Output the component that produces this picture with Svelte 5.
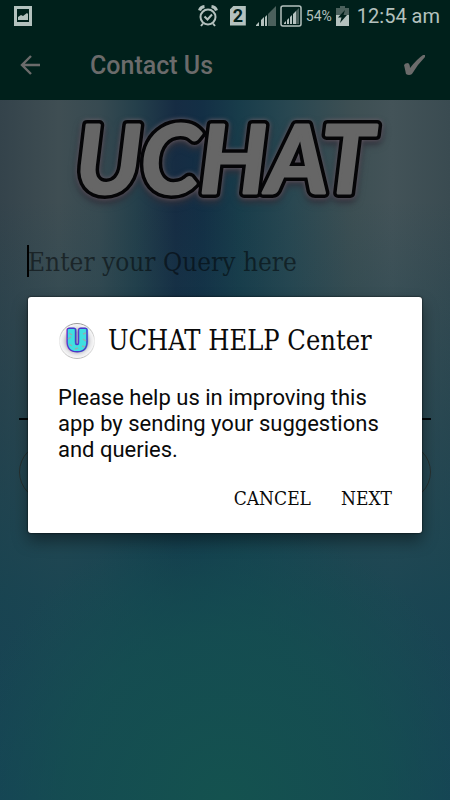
<script>
  let query = $state('');
  let showHelp = $state(true);

  function closeHelp() {
    showHelp = false;
  }
</script>

<div class="screen">
  <div class="status-bar">
    <svg width="18" height="20" viewBox="0 0 18 20">
      <path d="M0 0h18v20H0z M3 3v13h12V3z" fill="#b4c1be" fill-rule="evenodd" />
      <path d="M4 14v-3l3-2 2 1 4-3 1 1v6z" fill="#b4c1be" />
    </svg>
    <div class="status-icons">
      <svg width="20" height="22" viewBox="0 0 20 22" fill="none" stroke="#b4c1be">
        <circle cx="10" cy="12" r="7.5" stroke-width="2" />
        <path d="M6.5 11.5l3 3 4.5-5" stroke-width="2" />
        <path d="M1.5 5.5q1-3.5 5-4M18.5 5.5q-1-3.5-5-4" stroke-width="3" />
        <path d="M5 18.5l-2 2.5M15 18.5l2 2.5" stroke-width="2" />
      </svg>
      <div class="sim">2</div>
      <svg width="20" height="20" viewBox="0 0 20 20">
        <path d="M12 8L20 0v20h-8z" fill="#4b605c" />
        <path d="M0 20v-1l3-3v4zM5 20v-6l3-3v9zM9 20v-9l2-2v11z" fill="#b4c1be" />
      </svg>
      <svg width="22" height="22" viewBox="0 0 22 22">
        <rect x="1" y="1" width="20" height="20" rx="2" fill="none" stroke="#b4c1be" stroke-width="1.5" />
        <path d="M16 6l3-3v16h-3z" fill="#4b605c" />
        <path d="M4 19v-1l2-2v3zM7 19v-4l2-2v6zM10 19v-7l2-2v9zM13 19v-10l3-3v13z" fill="#b4c1be" />
      </svg>
      <span class="percent">54%</span>
      <svg width="13" height="20" viewBox="0 0 13 20">
        <path d="M0 2h4V0h5v2h4v8H0z" fill="#4b605c" />
        <path d="M0 9h13v11H0z" fill="#b4c1be" />
        <path d="M9 4L2 11.5h3.5L4 17l7-8H7.5z" fill="#00201b" />
      </svg>
      <span class="clock">12:54 am</span>
    </div>
  </div>

  <header>
    <button class="icon-btn" aria-label="Back">
      <svg width="20" height="20" viewBox="0 0 20 20" fill="none" stroke="#6b6b6b" stroke-width="2.4">
        <path d="M20 10H2M11 1L2 10l9 9" />
      </svg>
    </button>
    <h1>Contact Us</h1>
    <button class="icon-btn" aria-label="Submit">
      <svg width="22" height="20" viewBox="0 0 22 20">
        <path d="M0 10q1-2 4-2 2 1 2 5Q13 4 19 0l2 0 0 2Q13 10 8 19q-3 2-6 0Q1 14 0 10z" fill="#6b6b6b" />
      </svg>
    </button>
  </header>

  <main>
    <svg class="logo" viewBox="0 0 412 120" role="img" aria-label="UCHAT">
      <text class="logo-edge" x="206" y="93" text-anchor="middle">UCHAT</text>
      <text class="logo-fill" x="206" y="93" text-anchor="middle">UCHAT</text>
    </svg>
    <div class="field">
      <textarea aria-label="Query" placeholder="Enter your Query here" bind:value={query}></textarea>
      <span class="caret"></span>
    </div>
    <button class="send" aria-label="Send"></button>
  </main>

  {#if showHelp}
    <div class="overlay">
      <div class="dialog" role="dialog" aria-labelledby="help-title">
        <div class="dialog-head">
          <svg width="38" height="38" viewBox="0 0 38 38">
            <defs>
              <radialGradient id="disc">
                <stop offset="0.5" stop-color="#a9a7b4" />
                <stop offset="0.8" stop-color="#e8e8ea" />
                <stop offset="1" stop-color="#fbfbfb" />
              </radialGradient>
              <linearGradient id="rim" x2="0" y2="1">
                <stop offset="0" stop-color="#999" />
                <stop offset="0.5" stop-color="#eee" />
                <stop offset="1" stop-color="#bbb" />
              </linearGradient>
            </defs>
            <circle cx="19" cy="19" r="17.5" fill="url(#disc)" stroke="url(#rim)" />
            <text class="badge-edge" x="19" y="28" text-anchor="middle">U</text>
            <text class="badge-fill" x="19" y="28" text-anchor="middle">U</text>
            <path d="M11 11l3 2M10 17l3-2M11 22l3 2M17 27l3-1M24 24l3 1M25 17l3 2M25 12l3-1" stroke="#93aeb2" stroke-width="1.5" />
          </svg>
          <h2 id="help-title">UCHAT HELP Center</h2>
        </div>
        <p>Please help us in improving this app by sending your suggestions and queries.</p>
        <div class="actions">
          <button onclick={closeHelp}>CANCEL</button>
          <button onclick={closeHelp}>NEXT</button>
        </div>
      </div>
    </div>
  {/if}
</div>

<style>
:global(body) { margin: 0; }
.screen {
  position: relative;
  min-height: 100vh;
  display: flex;
  flex-direction: column;
  font-family: Roboto, sans-serif;
  background:
    radial-gradient(ellipse 60% 35% at 50% 100%, #14524f, rgba(20,80,80,0.7) 60%, transparent),
    linear-gradient(transparent 25%, rgba(22,66,80,0.55) 55%, rgba(20,68,82,0.85) 75%, #164256),
    linear-gradient(90deg, #34434b 0%, #3f4e53 13%, #374a51 22%, #25404b 30%, #162c43 39%, #132f45 45%, #183c4a 53%, #284751 64%, #3d4f53 78%, #435358 87%, #3a4b51 100%);
}
button {
  border: 0;
  padding: 0;
  background: none;
  cursor: pointer;
}
svg { display: block; }
.status-bar {
  height: 30px;
  box-sizing: border-box;
  padding: 1px 10px 0 14px;
  display: flex;
  align-items: center;
  justify-content: space-between;
  background: #00201b;
  color: #b4c1be;
}
.status-icons { display: flex; align-items: center; gap: 4px; }
.sim {
  width: 16px;
  margin: 0 6px 0 8px;
  line-height: 20px;
  text-align: center;
  font-size: 18px;
  font-weight: 700;
  color: #00201b;
  background: #b4c1be;
  clip-path: polygon(25% 0, 100% 0, 100% 100%, 0 100%, 0 20%);
}
.percent { font-size: 14px; }
.clock { margin-left: 4px; font-size: 20px; }
header {
  height: 70px;
  padding: 0 24px 0 20px;
  display: flex;
  align-items: center;
  background: #00201b;
}
h1 {
  flex: 1;
  margin: 0 0 0 50px;
  font-size: 25px;
  font-weight: 500;
  color: #6b6b6b;
}
main {
  flex: 1;
  padding: 0 19px;
  display: flex;
  flex-direction: column;
}
.logo {
  height: 120px;
  overflow: visible;
  filter: drop-shadow(0 0 2px #6b626c) drop-shadow(0 4px 3px #30303a);
}
.logo-edge, .logo-fill {
  font-family: Lato, sans-serif;
  font-size: 94px;
  font-weight: 700;
  font-style: italic;
  stroke-linejoin: round;
}
.logo-edge { fill: #050507; stroke: #050507; stroke-width: 10px; }
.logo-fill { fill: #666; stroke: #666; stroke-width: 3px; }
.field { position: relative; margin-top: 20px; }
textarea {
  display: block;
  width: 100%;
  height: 180px;
  box-sizing: border-box;
  padding: 4px 9px;
  border: 0;
  border-bottom: 2px solid #020507;
  outline: 0;
  resize: none;
  background: none;
  font-family: "DejaVu Serif Condensed", "DejaVu Serif", serif;
  font-size: 26px;
  line-height: 36px;
  color: #000;
}
textarea::placeholder { color: rgba(0,0,0,0.5); opacity: 1; }
.caret {
  position: absolute;
  left: 8px;
  top: 5px;
  width: 2px;
  height: 32px;
  background: #000;
}
.send {
  height: 58px;
  margin-top: 23px;
  border: 1px solid #26302f;
  border-radius: 29px;
}
.overlay {
  position: absolute;
  inset: 30px 0 0;
  padding: 0 28px;
  display: flex;
  align-items: center;
}
.dialog {
  flex: 1;
  padding: 24px 30px 17px;
  border-radius: 3px;
  background: #fff;
  color: #0a0a0a;
  box-shadow: 0 0 2px #000, 0 8px 16px rgba(0,0,0,0.4);
}
.dialog-head { display: flex; align-items: center; gap: 12px; }
.badge-edge, .badge-fill {
  font-family: "DejaVu Sans", sans-serif;
  font-size: 26px;
  font-weight: 700;
  stroke-linejoin: round;
}
.badge-edge { fill: #4a38c8; stroke: #4a38c8; stroke-width: 5px; }
.badge-fill { fill: #3fdfe0; stroke: #3fdfe0; stroke-width: 2px; }
h2 {
  margin: 0;
  font-family: "DejaVu Serif Condensed", "DejaVu Serif", serif;
  font-size: 27px;
  font-weight: 400;
  line-height: 40px;
  white-space: nowrap;
}
p { margin: 24px 0 17px; font-size: 22px; line-height: 26px; }
.actions { display: flex; justify-content: flex-end; gap: 30px; }
.actions button {
  font-family: "DejaVu Serif Condensed", "DejaVu Serif", serif;
  font-size: 19px;
  line-height: 36px;
  color: #0a0a0a;
}
</style>
